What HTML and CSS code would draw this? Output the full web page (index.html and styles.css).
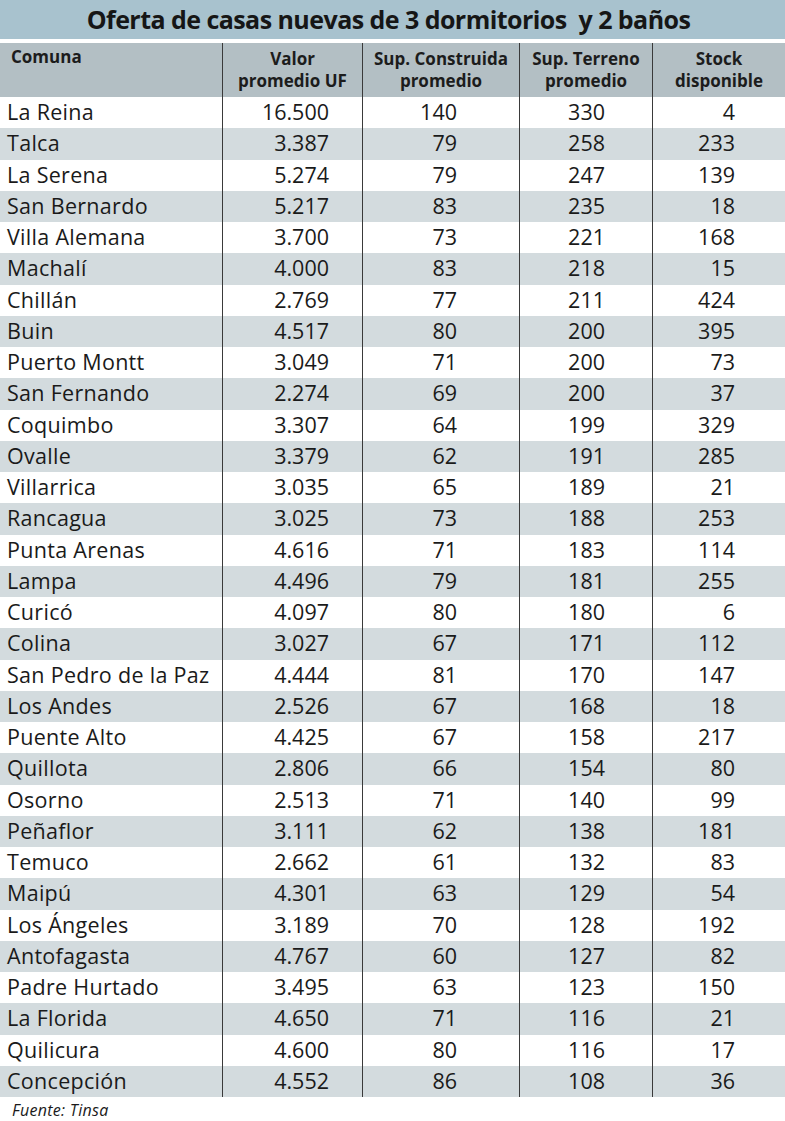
FILE: index.html
```html
<!DOCTYPE html>
<html lang="es">
<head>
<meta charset="utf-8">
<title>Oferta de casas nuevas</title>
<link rel="stylesheet" href="styles.css">
</head>
<body>
<div class="page">
  <h1 class="title">Oferta de casas nuevas de 3 dormitorios&nbsp; y 2 baños</h1>
  <div class="table">
    <div class="row head">
      <div class="c c1">Comuna</div>
      <div class="c c2">Valor<br>promedio UF</div>
      <div class="c c3">Sup. Construida<br>promedio</div>
      <div class="c c4">Sup. Terreno<br>promedio</div>
      <div class="c c5">Stock<br>disponible</div>
    </div>
    <div class="body" id="body"></div>
  </div>
  <div class="source">Fuente: Tinsa</div>
</div>
<script>
const data = [
["La Reina","16.500",140,330,4],
["Talca","3.387",79,258,233],
["La Serena","5.274",79,247,139],
["San Bernardo","5.217",83,235,18],
["Villa Alemana","3.700",73,221,168],
["Machalí","4.000",83,218,15],
["Chillán","2.769",77,211,424],
["Buin","4.517",80,200,395],
["Puerto Montt","3.049",71,200,73],
["San Fernando","2.274",69,200,37],
["Coquimbo","3.307",64,199,329],
["Ovalle","3.379",62,191,285],
["Villarrica","3.035",65,189,21],
["Rancagua","3.025",73,188,253],
["Punta Arenas","4.616",71,183,114],
["Lampa","4.496",79,181,255],
["Curicó","4.097",80,180,6],
["Colina","3.027",67,171,112],
["San Pedro de la Paz","4.444",81,170,147],
["Los Andes","2.526",67,168,18],
["Puente Alto","4.425",67,158,217],
["Quillota","2.806",66,154,80],
["Osorno","2.513",71,140,99],
["Peñaflor","3.111",62,138,181],
["Temuco","2.662",61,132,83],
["Maipú","4.301",63,129,54],
["Los Ángeles","3.189",70,128,192],
["Antofagasta","4.767",60,127,82],
["Padre Hurtado","3.495",63,123,150],
["La Florida","4.650",71,116,21],
["Quilicura","4.600",80,116,17],
["Concepción","4.552",86,108,36]
];
const body = document.getElementById("body");
data.forEach((r) => {
  const row = document.createElement("div");
  row.className = "row";
  r.forEach((v, i) => {
    const c = document.createElement("div");
    c.className = "c c" + (i + 1);
    c.textContent = v;
    row.appendChild(c);
  });
  body.appendChild(row);
});
</script>
</body>
</html>
```
FILE: styles.css
```css
html, body {
  margin: 0;
  padding: 0;
  background: #ffffff;
}
.page {
  width: 785px;
  font-family: "Open Sans", "Noto Sans", sans-serif;
  color: #1a1a1a;
}
.title {
  margin: 0;
  height: 39px;
  background: #a8c2ce;
  font-size: 25px;
  font-weight: 700;
  line-height: 39px;
  text-align: center;
  color: #161616;
  letter-spacing: -0.55px;
  padding-right: 8px;
  border-bottom: 4px solid #ffffff;
}
.table {
  display: flex;
  flex-direction: column;
}
.body {
  display: grid;
  grid-auto-rows: 31.25px;
}
.row {
  display: grid;
  grid-template-columns: 222px 140px 157px 133px 133px;
}
.body .row:nth-child(even) {
  background: #d3dbde;
}
.c {
  font-size: 21.5px;
  line-height: 30px;
  text-align: right;
  white-space: nowrap;
}
.c2, .c3, .c4, .c5 {
  border-left: 1px solid #3a3a3a;
}
.c1 {
  text-align: left;
  padding-left: 7px;
  letter-spacing: 0.3px;
}
.c2 { padding-right: 33px; }
.c3 { padding-right: 62px; }
.c4 { padding-right: 47px; }
.c5 { padding-right: 50px; }
.head {
  height: 54px;
  background: #b3bfc4;
}
.head .c {
  font-size: 17px;
  font-weight: 700;
  line-height: 22px;
  padding: 5px 0 0 0;
  text-align: center;
  color: #1c1c1c;
  letter-spacing: 0;
}
.head .c1 {
  text-align: left;
  padding-left: 11px;
  padding-top: 3px;
}
.source {
  font-size: 16px;
  font-style: italic;
  padding-left: 12px;
  line-height: 26px;
  letter-spacing: 0.3px;
  color: #1a1a1a;
}
```
